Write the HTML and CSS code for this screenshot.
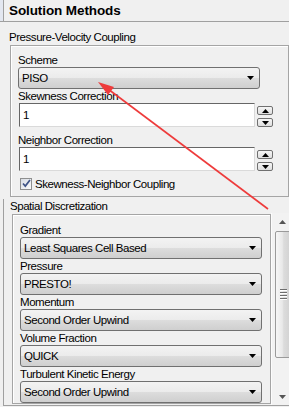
FILE: index.html
```html
<!DOCTYPE html>
<html lang="en">
<head>
    <meta charset="UTF-8">
    <meta name="viewport" content="width=device-width, initial-scale=1.0">
    <title>Solution Methods</title>
    <link rel="stylesheet" href="styles.css">
</head>
<body>
    <div class="head">
        <div class="title">Solution Methods</div>
    </div>

    <!-- Pressure-Velocity Coupling -->
    <div class="caption">Pressure-Velocity Coupling</div>
    <div class="group pv">
        <span class="lbl">Scheme</span>
        <div class="combo"><span>PISO</span><svg class="caret" width="7" height="4" viewBox="0 0 7 4"><path d="M0 0h7L3.5 4z"/></svg></div>

        <span class="lbl">Skewness Correction</span>
        <div class="spin-row">
            <div class="field">1</div>
            <div class="spin">
                <span class="spin-btn"><svg width="7" height="4" viewBox="0 0 7 4"><path d="M0 4h7L3.5 0z"/></svg></span>
                <span class="spin-btn"><svg width="7" height="4" viewBox="0 0 7 4"><path d="M0 0h7L3.5 4z"/></svg></span>
            </div>
        </div>

        <span class="lbl">Neighbor Correction</span>
        <div class="spin-row">
            <div class="field">1</div>
            <div class="spin">
                <span class="spin-btn"><svg width="7" height="4" viewBox="0 0 7 4"><path d="M0 4h7L3.5 0z"/></svg></span>
                <span class="spin-btn"><svg width="7" height="4" viewBox="0 0 7 4"><path d="M0 0h7L3.5 4z"/></svg></span>
            </div>
        </div>

        <div class="check-row">
            <span class="check"><svg width="9" height="9" viewBox="0 0 9 9"><path d="M1 4.5l2.3 2.6L8 1" fill="none" stroke="#3f5487" stroke-width="1.7"/></svg></span>
            Skewness-Neighbor Coupling
        </div>
    </div>

    <!-- Spatial Discretization -->
    <div class="spatial">
        <div class="caption">Spatial Discretization</div>
        <div class="scroll-area">
            <div class="group sd">
                <span class="lbl">Gradient</span>
                <div class="combo"><span>Least Squares Cell Based</span><svg class="caret" width="7" height="4" viewBox="0 0 7 4"><path d="M0 0h7L3.5 4z"/></svg></div>
                <span class="lbl">Pressure</span>
                <div class="combo"><span>PRESTO!</span><svg class="caret" width="7" height="4" viewBox="0 0 7 4"><path d="M0 0h7L3.5 4z"/></svg></div>
                <span class="lbl">Momentum</span>
                <div class="combo"><span>Second Order Upwind</span><svg class="caret" width="7" height="4" viewBox="0 0 7 4"><path d="M0 0h7L3.5 4z"/></svg></div>
                <span class="lbl">Volume Fraction</span>
                <div class="combo"><span>QUICK</span><svg class="caret" width="7" height="4" viewBox="0 0 7 4"><path d="M0 0h7L3.5 4z"/></svg></div>
                <span class="lbl">Turbulent Kinetic Energy</span>
                <div class="combo"><span>Second Order Upwind</span><svg class="caret" width="7" height="4" viewBox="0 0 7 4"><path d="M0 0h7L3.5 4z"/></svg></div>
            </div>
            <div class="scrollbar">
                <div class="sb-btn"><svg width="7" height="4" viewBox="0 0 7 4"><path d="M0 4h7L3.5 0z" fill="#555"/></svg></div>
                <div class="thumb"><span class="grip"></span><span class="grip"></span><span class="grip"></span><span class="grip"></span></div>
                <div class="sb-btn sb-down"><svg width="7" height="4" viewBox="0 0 7 4"><path d="M0 0h7L3.5 4z" fill="#555"/></svg></div>
            </div>
        </div>
    </div>

    <!-- annotation arrow drawn over the panel -->
    <svg class="arrow" width="289" height="407" viewBox="0 0 289 407">
        <line x1="268" y1="209" x2="108" y2="89" stroke="#ee3b3b" stroke-width="1.6"/>
        <path d="M98 82L114 87L108 95z" fill="#ee3b3b"/>
    </svg>
</body>
</html>
```

FILE: styles.css
```css
* {
    box-sizing: border-box;
}
body {
    margin: 0;
    width: 289px;
    height: 407px;
    overflow: hidden;
    position: relative;
    background-color: #f0f0f0;
    font-family: "Liberation Sans", Arial, sans-serif;
    font-size: 11.5px;
    letter-spacing: -0.45px;
    color: #000;
}
.head {
    background-color: #e3e7f0; /* strip left of the panel */
    border-bottom: 1px solid #a0a0a0;
}
.title {
    margin-left: 3px;
    border-left: 1px solid #a0a0a0;
    background-color: #f0f0f0;
    height: 21px;
    line-height: 21px;
    padding-left: 5px;
    font-size: 13.5px;
    font-weight: bold;
    letter-spacing: -0.1px;
}
.caption {
    line-height: 14px;
    padding-left: 9px;
    margin: 8px 0 1px;
}
.group {
    border: 1px solid #a5a5a5;
    box-shadow: inset 1px 1px 0 #fff;
}
.pv {
    margin-left: 10px;
    padding: 7px 15px 6px 7px;
}
.lbl {
    display: block;
    line-height: 14px;
}
.combo {
    display: flex;
    align-items: center;
    width: 242px;
    height: 22px;
    padding: 0 5px 0 3px;
    border: 1px solid #707070;
    border-radius: 3px;
    background: linear-gradient(#f3f3f3, #ebebeb 50%, #dddddd 50%, #cfcfcf);
}
.combo span {
    flex: 1;
}
.caret {
    display: block;
}
.spin-row {
    display: flex;
    margin-bottom: 6px;
}
.field {
    margin-left: 1px;
    width: 236px;
    height: 24px;
    line-height: 22px;
    padding-left: 3px;
    background-color: #fff;
    border: 1px solid;
    border-color: #666 #dadada #dadada #666;
}
.spin {
    display: flex;
    flex-direction: column;
    gap: 3px;
    margin-left: 2px;
    padding-top: 3px;
}
.spin-btn {
    display: flex;
    align-items: center;
    justify-content: center;
    width: 16px;
    height: 9px;
    border: 1px solid #707070;
    border-radius: 2px;
    background: linear-gradient(#f6f6f6, #dedede);
}
.check-row {
    display: flex;
    align-items: center;
    gap: 3px;
    margin-top: 6px;
    height: 13px;
}
.check {
    display: flex;
    align-items: center;
    justify-content: center;
    margin-left: 2px;
    width: 12px;
    height: 12px;
    border: 1px solid #8e8f8f;
    background: linear-gradient(135deg, #d8dde4, #fbfbfb);
}
.spatial {
    margin-left: 3px;
    border-left: 1px solid #a0a0a0;
    border-bottom: 1px solid #a0a0a0;
}
.spatial .caption {
    padding-left: 6px;
    margin: 2px 0 0;
}
.scroll-area {
    display: flex;
    height: 192px;
    overflow: hidden;
}
.sd {
    flex: none;
    align-self: flex-start;
    margin: 1px 0 0 8px;
    width: 259px;
    padding: 8px 8px 0 7px;
}
.scrollbar {
    flex: none;
    display: flex;
    flex-direction: column;
    width: 20px;
    padding-left: 2px;
    border-left: 1px solid #fcfcfc;
    background-color: #f2f2f2;
}
.sb-btn {
    display: flex;
    align-items: center;
    justify-content: center;
    height: 17px;
}
.sb-down {
    margin-top: auto;
}
.thumb {
    display: flex;
    flex-direction: column;
    align-items: center;
    justify-content: center;
    gap: 1px;
    margin: 1px 0 0 1px;
    height: 127px;
    border: 1px solid #9a9a9a;
    border-radius: 2px;
    background: linear-gradient(90deg, #f6f6f6, #e9e9e9 45%, #dcdcdc 55%, #d2d2d2);
}
.grip {
    width: 7px;
    height: 1px;
    background-color: #6e6e6e;
    box-shadow: 0 1px 0 #fff;
    margin-bottom: 1px;
}
.arrow {
    position: absolute;
    left: 0;
    top: 0;
    pointer-events: none;
}
```
